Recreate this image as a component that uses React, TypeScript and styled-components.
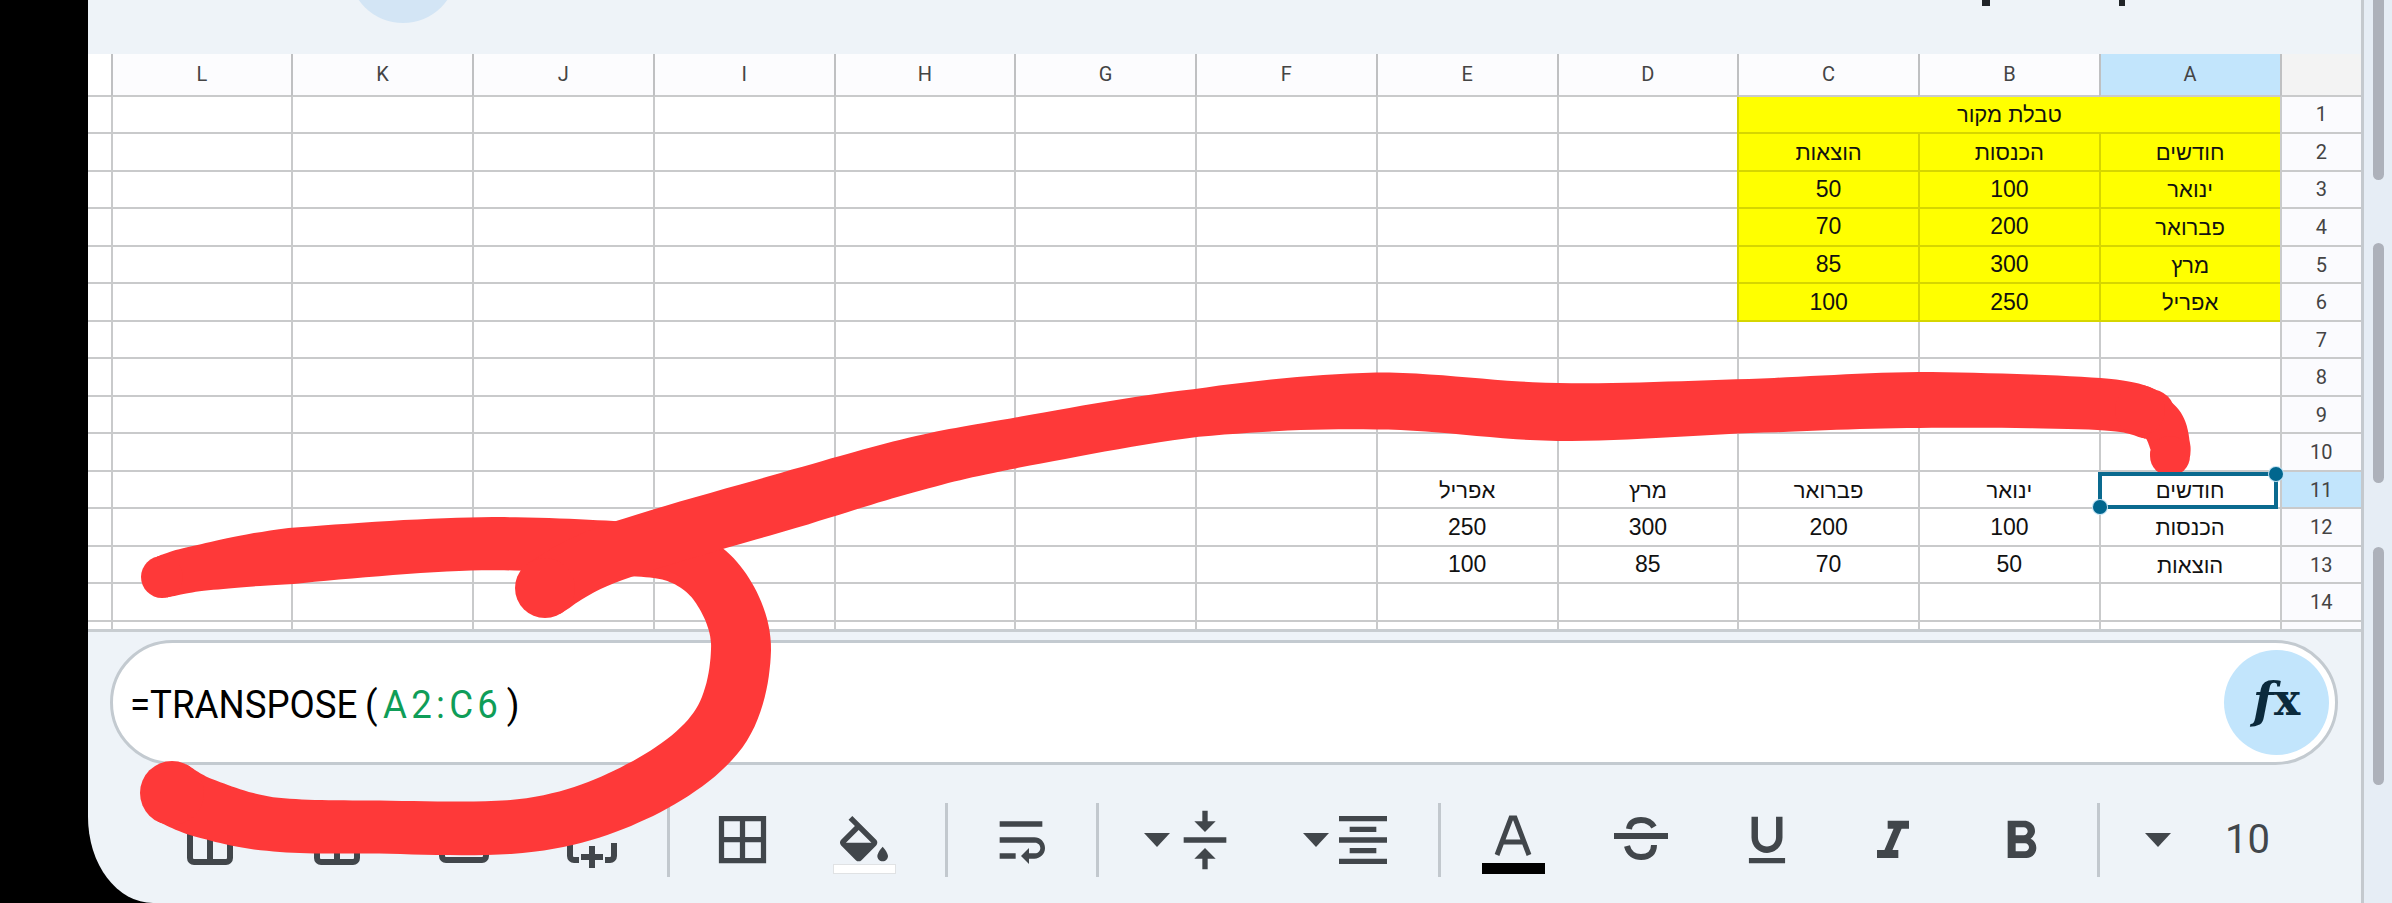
import React from "react";
import styled, { createGlobalStyle } from "styled-components";

const Global = createGlobalStyle`
  html, body { margin: 0; padding: 0; background: #000; }
  body { font-family: "Liberation Sans", Arial, sans-serif; overflow: hidden; }
`;

const INK = "#41464b";
const LINE = "#c9cacb";
const RED = "#fe3939";

const Page = styled.div`
  position: relative;
  display: flex;
  width: 2392px;
  height: 903px;
  background: #000;
  overflow: hidden;
`;
const Bezel = styled.div`
  flex: 0 0 88px;
  background: #000;
`;
const Panel = styled.main`
  flex: 0 0 2276px;
  box-sizing: border-box;
  display: flex;
  flex-direction: column;
  background: #eef3f8;
  border-right: 3px solid #c4c9ce;
  border-bottom-left-radius: 65px 86px;
`;
const Rail = styled.aside`
  flex: 1;
  display: flex;
  flex-direction: column;
  align-items: center;
  background: #e6edf5;
`;
const Thumb = styled.div<{ $h: number; $gap: number }>`
  width: 11px;
  height: ${(p) => p.$h}px;
  margin-top: ${(p) => p.$gap}px;
  background: #adb1ba;
  border-radius: 0 0 6px 6px;
  border-top-left-radius: ${(p) => (p.$gap ? 6 : 0)}px;
  border-top-right-radius: ${(p) => (p.$gap ? 6 : 0)}px;
`;

const TopBar = styled.header`
  flex: 0 0 54px;
  display: flex;
  align-items: flex-start;
  overflow: hidden;
`;
const Avatar = styled.div`
  flex: 0 0 108px;
  height: 108px;
  margin: -85px 0 0 261px;
  border-radius: 50%;
  background: #d3e5f5;
`;
const Tick = styled.span<{ $gap: number; $w: number }>`
  width: ${(p) => p.$w}px;
  height: 6px;
  margin-left: ${(p) => p.$gap}px;
  background: #202428;
`;

const Sheet = styled.section`
  display: grid;
  grid-template-columns: 22.5px repeat(12, 180.75px) 1fr;
  grid-template-rows: 42.7px repeat(14, 37.52px) 6.8px;
  background: #fff;
  border-bottom: 3px solid #c8cdd1;
`;
const BaseCell = styled.div<{ $end?: boolean }>`
  box-sizing: border-box;
  display: flex;
  align-items: center;
  justify-content: center;
  min-width: 0;
  border-bottom: ${(p) => (p.$end ? "0" : `2px solid ${LINE}`)};
`;
const Gutter = styled(BaseCell)``;
const ColHead = styled(BaseCell)<{ $on?: boolean }>`
  border-left: 2px solid #bfc0c2;
  background: ${(p) => (p.$on ? "#c2e5fc" : "#fcfcfe")};
  color: #444;
  font: 20px Roboto, sans-serif;
`;
const Corner = styled(BaseCell)`
  border-left: 2px solid #bfc0c2;
  background: #f3f3f3;
`;
const RowHead = styled(BaseCell)<{ $on?: boolean }>`
  border-left: 2px solid ${LINE};
  background: ${(p) => (p.$on ? "#c2e5fc" : "#fbfbfe")};
  color: #444;
  font: 20px Roboto, sans-serif;
`;
const Cell = styled(BaseCell)<{ $fill?: boolean; $span?: number; $digits?: boolean }>`
  position: relative;
  grid-column: span ${(p) => p.$span ?? 1};
  padding-top: ${(p) => (p.$digits ? 0 : 2)}px;
  border-left: 2px solid ${(p) => (p.$fill ? "#d6d600" : LINE)};
  background: ${(p) => (p.$fill ? "#ffff00" : "#fff")};
  border-bottom-color: ${(p) => (p.$fill ? "#d6d600" : LINE)};
  color: #111;
  font: ${(p) => (p.$digits ? 23 : 22)}px "Liberation Sans", Arial, sans-serif;
`;
const Selection = styled.div`
  position: absolute;
  z-index: 2;
  top: 0;
  left: -3px;
  right: 2px;
  bottom: -2px;
  border: 4px solid #0a6a8f;
`;
const Handle = styled.span<{ $at: "tr" | "bl" }>`
  position: absolute;
  width: 14px;
  height: 14px;
  border-radius: 50%;
  background: #01668e;
  box-shadow: 0 0 0 1px #bfe0f2;
  ${(p) => (p.$at === "tr" ? "top: -9px; right: -9px;" : "bottom: -9px; left: -9px;")}
`;

const FormulaBar = styled.div`
  flex: 0 0 125px;
  box-sizing: border-box;
  display: flex;
  align-items: center;
  margin: 8px 23px 0 22px;
  padding: 0 6px 0 17px;
  background: #fff;
  border: 3px solid #c3cad0;
  border-radius: 63px;
`;
const Formula = styled.div`
  flex: 1;
  padding-top: 5px;
  font: 39px Roboto, sans-serif;
  color: #000;
  white-space: pre;
  transform: scaleX(0.94);
  transform-origin: left center;
`;
const Range = styled.span`
  color: #0f9d58;
  letter-spacing: 4.5px;
`;
const ParenOpen = styled.span`
  margin: 0 6px 0 8px;
`;
const ParenClose = styled.span`
  margin-left: 5px;
`;
const FxButton = styled.div`
  flex: 0 0 105px;
  box-sizing: border-box;
  height: 105px;
  padding-bottom: 4px;
  display: flex;
  align-items: center;
  justify-content: center;
  border-radius: 50%;
  background: #c2e5fc;
  color: #0b2a3c;
  font: bold 49px "DejaVu Serif", serif;
  line-height: 1;
`;
const FxF = styled.span`
  font-style: italic;
`;
const FxX = styled.span`
  font-size: 44px;
`;

const Toolbar = styled.div`
  flex: 1;
  display: flex;
  align-items: center;
  padding-top: 12px;
`;
const Slot = styled.div<{ $w: number; $gap: number; $dy?: number }>`
  flex: 0 0 ${(p) => p.$w}px;
  display: flex;
  flex-direction: column;
  align-items: center;
  justify-content: center;
  height: 74px;
  margin-left: ${(p) => p.$gap}px;
  margin-top: ${(p) => p.$dy ?? 0}px;
  color: ${INK};
`;
const Sep = styled.div`
  width: 3px;
  height: 74px;
  background: #c2c8ce;
`;
const Caret = styled.div`
  width: 0;
  height: 0;
  border-left: 13.5px solid transparent;
  border-right: 13.5px solid transparent;
  border-top: 14px solid ${INK};
`;
const SizeValue = styled.span`
  font: 40px Roboto, sans-serif;
  color: ${INK};
`;
const ColorStrip = styled.div<{ $black?: boolean }>`
  box-sizing: border-box;
  width: 63px;
  height: ${(p) => (p.$black ? 11 : 10)}px;
  flex: none;
  background: ${(p) => (p.$black ? "#000" : "#fff")};
  border: ${(p) => (p.$black ? "none" : "1px solid #e0e2e4")};
`;
const Ink = styled.svg`
  position: absolute;
  left: 0;
  top: 0;
  width: 2392px;
  height: 903px;
  pointer-events: none;
`;

// A finger stroke: a centre line with a width at each point, turned into one filled outline.
type Pt = [number, number, number];
const sample = (pts: Pt[]): Pt[] => {
  const out: Pt[] = [];
  for (let i = 0; i < pts.length - 1; i++) {
    const a = pts[Math.max(0, i - 1)];
    const b = pts[i];
    const c = pts[i + 1];
    const d = pts[Math.min(pts.length - 1, i + 2)];
    for (let s = 0; s < 14; s++) {
      const t = s / 14;
      const f = (k: 0 | 1) =>
        0.5 *
        (2 * b[k] +
          (c[k] - a[k]) * t +
          (2 * a[k] - 5 * b[k] + 4 * c[k] - d[k]) * t * t +
          (3 * b[k] - a[k] - 3 * c[k] + d[k]) * t * t * t);
      out.push([f(0), f(1), b[2] + (c[2] - b[2]) * t]);
    }
  }
  out.push(pts[pts.length - 1]);
  return out;
};
const outline = (line: Pt[]): string => {
  const side = (sign: number) =>
    line.map((p, i) => {
      const q0 = line[Math.max(0, i - 1)];
      const q1 = line[Math.min(line.length - 1, i + 1)];
      const dx = q1[0] - q0[0];
      const dy = q1[1] - q0[1];
      const len = Math.hypot(dx, dy) || 1;
      const r = (p[2] / 2) * sign;
      return `${(p[0] - (dy / len) * r).toFixed(1)} ${(p[1] + (dx / len) * r).toFixed(1)}`;
    });
  return `M${[...side(1), ...side(-1).reverse()].join("L")}Z`;
};
const Brush = ({ pts }: { pts: Pt[] }) => {
  const line = sample(pts);
  const a = pts[0];
  const z = pts[pts.length - 1];
  return (
    <>
      <path d={outline(line)} />
      <circle cx={a[0]} cy={a[1]} r={a[2] / 2} />
      <circle cx={z[0]} cy={z[1]} r={z[2] / 2} />
    </>
  );
};

const LOOP: Pt[] = [
  [172, 793, 64], [204, 808, 60], [270, 824, 54], [370, 827, 53], [530, 825, 54], [640, 790, 58],
  [718, 730, 60], [741, 650, 60], [722, 590, 58], [680, 556, 56], [612, 548, 54], [470, 544, 53],
  [291, 556, 56], [200, 568, 46], [162, 577, 42],
];
const SWEEP: Pt[] = [
  [545, 588, 60], [612, 553, 58], [800, 497, 57], [915, 464, 54], [1015, 443, 50], [1196, 413, 48],
  [1376, 401, 57], [1558, 412, 58], [1750, 406, 54], [1919, 400, 56], [2099, 404, 52], [2150, 414, 50],
];
const TIP: Pt[] = [[2140, 410, 50], [2162, 424, 44], [2170, 445, 40], [2170, 456, 40]];

const Md = ({ d, size = 63 }: { d: string; size?: number }) => (
  <svg width={size} height={size} viewBox="0 0 24 24" fill="currentColor">
    <path d={d} />
  </svg>
);

const P = {
  grid: "M3 3v18h18V3H3zm8 16H5v-6h6v6zm0-8H5V5h6v6zm8 8h-6v-6h6v6zm0-8h-6V5h6v6z",
  fill: "M16.56 8.94L7.62 0 6.21 1.41l2.38 2.38-5.15 5.15c-.59.59-.59 1.54 0 2.12l5.5 5.5c.29.29.68.44 1.06.44s.77-.15 1.06-.44l5.5-5.5c.59-.58.59-1.53 0-2.12zM5.21 10L10 5.21 14.79 10H5.21zM19 11.5s-2 2.17-2 3.5c0 1.1.9 2 2 2s2-.9 2-2c0-1.33-2-3.5-2-3.5z",
  wrap: "M4 19h6v-2H4v2zM20 5H4v2h16V5zm-3 6H4v2h13.25c1.1 0 2 .9 2 2s-.9 2-2 2H15v-2l-3 3 3 3v-2h2c2.21 0 4-1.79 4-4s-1.79-4-4-4z",
  compress: "M8 19h3v4h2v-4h3l-4-4-4 4zm8-14h-3V1h-2v4H8l4 4 4-4zM4 11v2h16v-2H4z",
  align: "M7 15v2h10v-2H7zm-4 6h18v-2H3v2zm0-8h18v-2H3v2zm4-6v2h10V7H7zM3 3v2h18V3H3z",
  under: "M12 17c3.31 0 6-2.69 6-6V3h-2.5v8c0 1.93-1.57 3.5-3.5 3.5S8.5 12.93 8.5 11V3H6v8c0 3.31 2.69 6 6 6zm-7 2v2h14v-2H5z",
  italic: "M10 4v3h2.21l-3.42 8H6v3h8v-3h-2.21l3.42-8H18V4z",
  bold: "M15.6 10.79c.97-.67 1.65-1.77 1.65-2.79 0-2.26-1.75-4-4-4H7v14h7.04c2.09 0 3.71-1.7 3.71-3.79 0-1.52-.86-2.82-2.15-3.42zM10 6.5h3c.83 0 1.5.67 1.5 1.5s-.67 1.5-1.5 1.5h-3v-3zm3.5 9H10v-3h3.5c.83 0 1.5.67 1.5 1.5s-.67 1.5-1.5 1.5z",
};

const InsertCol = () => (
  <svg width="46" height="74" viewBox="0 0 46 74" fill="none" stroke={INK} strokeWidth="6">
    <rect x="3" y="12" width="40" height="47" rx="4" />
    <path d="M23 12v47" />
  </svg>
);
const InsertRow = () => (
  <svg width="50" height="74" viewBox="0 0 50 74" fill="none" stroke={INK} strokeWidth="6">
    <rect x="3" y="12" width="44" height="45" rx="4" />
  </svg>
);
const InsertAny = () => (
  <svg width="50" height="74" viewBox="0 0 50 74" fill="none" stroke={INK} strokeWidth="6">
    <path d="M3 40v13a4 4 0 0 0 4 4h5M47 40v13a4 4 0 0 1-4 4h-5M25 43v22M14 54h22" />
  </svg>
);
const Strike = () => (
  <svg width="56" height="74" viewBox="0 0 56 74" fill="none" stroke={INK}>
    <path d="M1 33h54" strokeWidth="6" />
    <path d="M16 26c1-7 6-9 12-9s10 2 13 7" strokeWidth="6" />
    <path d="M14 43c2 8 8 11 14 11 9 0 13-5 13-12" strokeWidth="6" />
  </svg>
);
const LetterA = () => (
  <svg width="38" height="58" viewBox="0 0 38 58" fill="none" stroke={INK} strokeWidth="5">
    <path d="M3 50L17 13h4l14 37M9 37h20" />
  </svg>
);

type Tool = { c: number; w: number; dy?: number; node: React.ReactNode };
const TOOLS: Tool[] = [
  { c: 210, w: 46, node: <InsertCol /> },
  { c: 337, w: 46, node: <InsertCol /> },
  { c: 464, w: 50, node: <InsertRow /> },
  { c: 592, w: 50, node: <InsertAny /> },
  { c: 668, w: 3, node: <Sep /> },
  { c: 742, w: 63, node: <Md d={P.grid} /> },
  {
    c: 864,
    w: 64,
    node: (
      <>
        <svg width="64" height="58" viewBox="0 -3.75 24 21.75" fill="currentColor">
          <path d={P.fill} />
        </svg>
        <ColorStrip />
      </>
    ),
  },
  { c: 946, w: 3, node: <Sep /> },
  { c: 1021, w: 64, node: <Md d={P.wrap} size={64} /> },
  { c: 1097, w: 3, node: <Sep /> },
  { c: 1157, w: 27, node: <Caret /> },
  { c: 1205, w: 64, node: <Md d={P.compress} size={64} /> },
  { c: 1316, w: 27, node: <Caret /> },
  { c: 1363, w: 64, node: <Md d={P.align} size={64} /> },
  { c: 1439, w: 3, node: <Sep /> },
  {
    c: 1513,
    w: 63,
    node: (
      <>
        <LetterA />
        <ColorStrip $black />
      </>
    ),
  },
  { c: 1641, w: 56, node: <Strike /> },
  { c: 1767, w: 62, node: <Md d={P.under} size={62} /> },
  { c: 1893, w: 64, dy: 5, node: <Md d={P.italic} size={64} /> },
  { c: 2021, w: 64, dy: 5, node: <Md d={P.bold} size={64} /> },
  { c: 2098, w: 3, node: <Sep /> },
  { c: 2158, w: 27, node: <Caret /> },
  { c: 2246, w: 42, node: <SizeValue>10</SizeValue> },
];

const COLUMNS = ["L", "K", "J", "I", "H", "G", "F", "E", "D", "C", "B", "A"];

// rows keyed by row number, cells keyed by column letter
const DATA: Record<number, Record<string, string>> = {
  2: { C: "הוצאות", B: "הכנסות", A: "חודשים" },
  3: { C: "50", B: "100", A: "ינואר" },
  4: { C: "70", B: "200", A: "פברואר" },
  5: { C: "85", B: "300", A: "מרץ" },
  6: { C: "100", B: "250", A: "אפריל" },
  11: { E: "אפריל", D: "מרץ", C: "פברואר", B: "ינואר", A: "חודשים" },
  12: { E: "250", D: "300", C: "200", B: "100", A: "הכנסות" },
  13: { E: "100", D: "85", C: "70", B: "50", A: "הוצאות" },
};

const SheetRow = ({ row }: { row: number }) => {
  const cols = row === 1 ? COLUMNS.slice(0, 9) : COLUMNS;
  const yellow = row >= 2 && row <= 6;
  return (
    <>
      <Gutter />
      {cols.map((c) => {
        const value = DATA[row]?.[c];
        const selected = row === 11 && c === "A";
        return (
          <Cell key={c} $fill={yellow && "CBA".includes(c)} $digits={/^\d+$/.test(value ?? "")}>
            {value}
            {selected && (
              <Selection>
                <Handle $at="tr" />
                <Handle $at="bl" />
              </Selection>
            )}
          </Cell>
        );
      })}
      {row === 1 && (
        <Cell $fill $span={3}>
          טבלת מקור
        </Cell>
      )}
      <RowHead $on={row === 11}>{row}</RowHead>
    </>
  );
};

export default function App() {
  let right = 88;
  return (
    <Page>
      <Global />
      <Bezel />
      <Panel>
        <TopBar>
          <Avatar />
          <Tick $w={8} $gap={1525} />
          <Tick $w={6} $gap={129} />
        </TopBar>
        <Sheet>
          <Gutter />
          {COLUMNS.map((c) => (
            <ColHead key={c} $on={c === "A"}>
              {c}
            </ColHead>
          ))}
          <Corner />
          {Array.from({ length: 14 }, (_, i) => (
            <SheetRow key={i} row={i + 1} />
          ))}
          <Gutter $end />
          {COLUMNS.map((c) => (
            <Cell key={c} $end />
          ))}
          <RowHead $end />
        </Sheet>
        <FormulaBar>
          <Formula>
            =TRANSPOSE<ParenOpen>(</ParenOpen>
            <Range>A2:C6</Range>
            <ParenClose>)</ParenClose>
          </Formula>
          <FxButton>
            <FxF>f</FxF>
            <FxX>x</FxX>
          </FxButton>
        </FormulaBar>
        <Toolbar>
          {TOOLS.map((t) => {
            const left = t.c - t.w / 2;
            const gap = left - right;
            right = left + t.w;
            return (
              <Slot key={t.c} $w={t.w} $gap={gap} $dy={t.dy}>
                {t.node}
              </Slot>
            );
          })}
        </Toolbar>
      </Panel>
      <Rail>
        <Thumb $h={180} $gap={0} />
        <Thumb $h={240} $gap={63} />
        <Thumb $h={238} $gap={64} />
      </Rail>
      <Ink viewBox="0 0 2392 903" fill={RED}>
        <Brush pts={LOOP} />
        <Brush pts={SWEEP} />
        <Brush pts={TIP} />
      </Ink>
    </Page>
  );
}
